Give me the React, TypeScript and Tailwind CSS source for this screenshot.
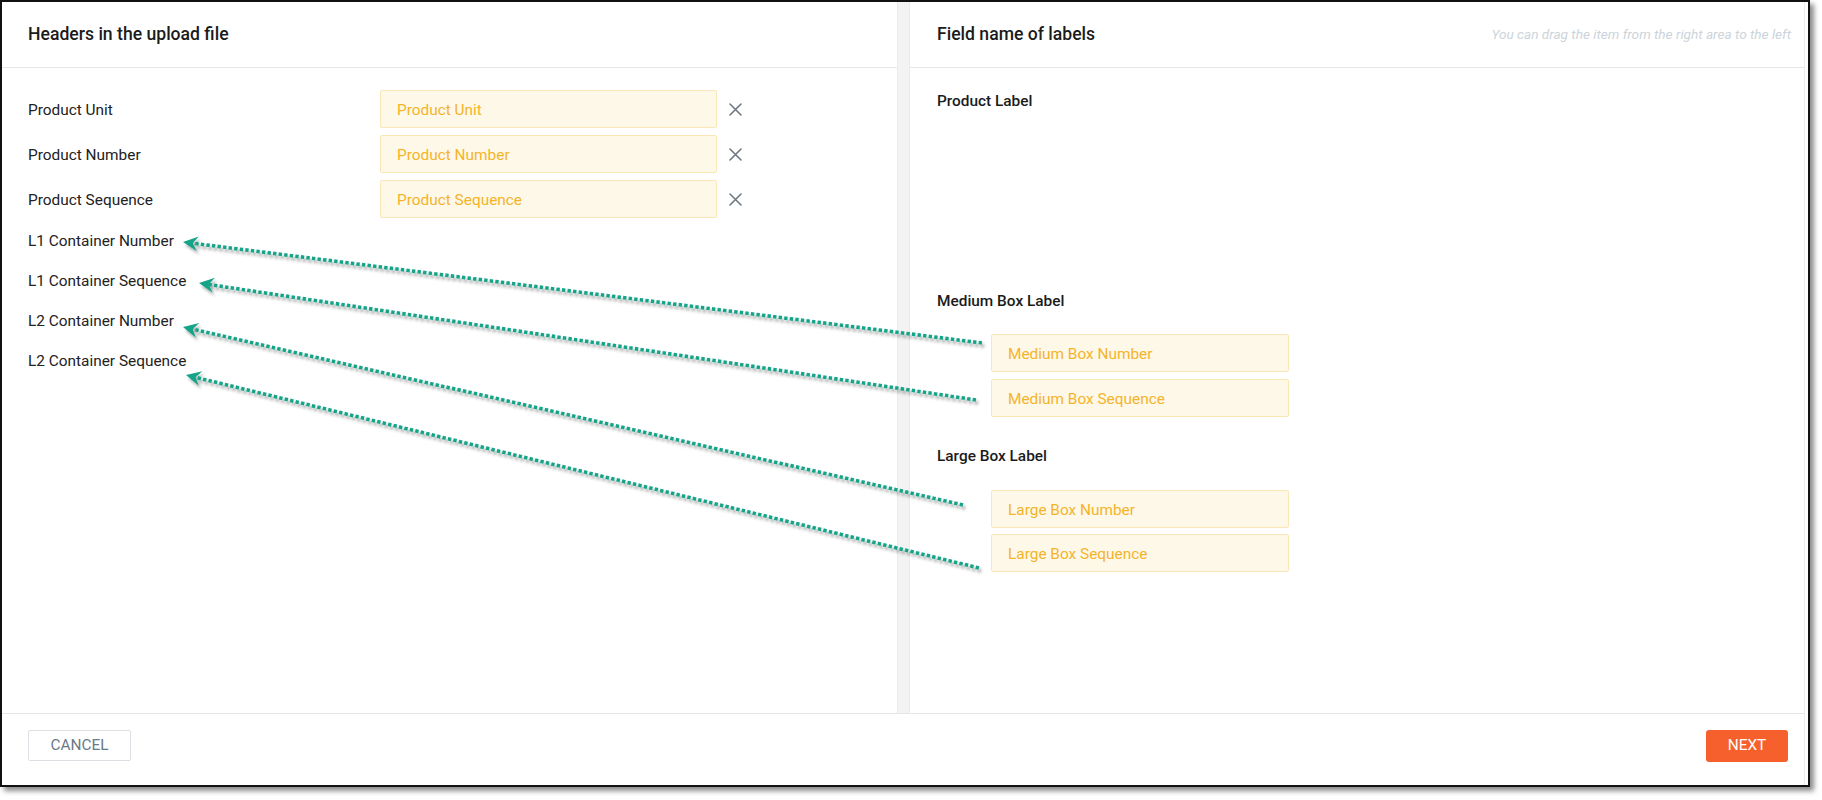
import React from "react";

const leftRows: { label: string; value?: string }[] = [
  { label: "Product Unit", value: "Product Unit" },
  { label: "Product Number", value: "Product Number" },
  { label: "Product Sequence", value: "Product Sequence" },
  { label: "L1 Container Number" },
  { label: "L1 Container Sequence" },
  { label: "L2 Container Number" },
  { label: "L2 Container Sequence" },
];

const arrows = [
  { x1: 982, y1: 343, x2: 183, y2: 242 },
  { x1: 976, y1: 400, x2: 199, y2: 283 },
  { x1: 963, y1: 505, x2: 183, y2: 327 },
  { x1: 979, y1: 568, x2: 186, y2: 375 },
];

function CloseIcon() {
  return (
    <svg width="13" height="13" viewBox="0 0 13 13" className="ml-[12px] shrink-0">
      <path d="M1 1 L12 12 M12 1 L1 12" stroke="#6f7782" strokeWidth="1.6" strokeLinecap="round" />
    </svg>
  );
}

function YellowBox({ text, width }: { text: string; width: string }) {
  return (
    <div
      className={`${width} h-[38px] shrink-0 flex items-center px-4 pt-[3px] bg-[#fef8e9] border border-[#fbe7b6] rounded-[2px] text-[15.4px] text-[#f4b42a]`}
    >
      {text}
    </div>
  );
}

function Arrow({ x1, y1, x2, y2 }: { x1: number; y1: number; x2: number; y2: number }) {
  const dx = x2 - x1;
  const dy = y2 - y1;
  const len = Math.sqrt(dx * dx + dy * dy);
  const ux = dx / len;
  const uy = dy / len;
  const L = 15;
  const W = 7.5;
  const bx = x2 - ux * L;
  const by = y2 - uy * L;
  const px = -uy;
  const py = ux;
  const nx = x2 - ux * L * 0.65;
  const ny = y2 - uy * L * 0.65;
  const pts = `${x2},${y2} ${bx + px * W},${by + py * W} ${nx},${ny} ${bx - px * W},${by - py * W}`;
  const ex = x2 - ux * L * 0.6;
  const ey = y2 - uy * L * 0.6;
  return (
    <g filter="url(#arrowShadow)">
      <line x1={x1} y1={y1} x2={ex} y2={ey} stroke="#17a488" strokeWidth="3.6" strokeDasharray="3.4 2.2" />
      <polygon points={pts} fill="#17a488" />
    </g>
  );
}

export default function App() {
  return (
    <div className="relative w-[1822px] h-[800px] bg-white font-['Roboto','Liberation_Sans',sans-serif]">
      <div className="w-[1810px] h-[787px] border-2 border-[#111] bg-white shadow-[4px_4px_5px_rgba(0,0,0,0.45)] flex">
        <div className="flex-1 mr-[3px] border-r border-[#ececec] flex flex-col min-w-0">
          <div className="flex flex-1 min-h-0">
            {/* Left panel */}
            <div className="w-[895px] shrink-0 flex flex-col">
              <div className="h-[66px] border-b border-[#e6e6e6] flex items-center pl-[26px] text-[17.6px] font-medium text-[#1b1b1b]">
                Headers in the upload file
              </div>
              <div className="pt-[22px] pl-[26px] flex flex-col gap-[7px]">
                {leftRows.map((r) => (
                  <div key={r.label} className={`flex items-center ${r.value ? "h-[38px]" : "h-[33px]"}`}>
                    <span className={`w-[352px] shrink-0 text-[15.4px] text-[#222] ${r.value ? "pt-[3px]" : ""}`}>
                      {r.label}
                    </span>
                    {r.value && (
                      <>
                        <YellowBox text={r.value} width="w-[337px]" />
                        <CloseIcon />
                      </>
                    )}
                  </div>
                ))}
              </div>
            </div>
            {/* Divider strip */}
            <div className="w-[13px] shrink-0 bg-[#f3f3f3] border-x border-[#ebebeb]" />
            {/* Right panel */}
            <div className="flex-1 flex flex-col min-w-0">
              <div className="h-[66px] border-b border-[#e6e6e6] flex items-center justify-between pl-[27px] pr-[13px]">
                <span className="text-[17.6px] font-medium text-[#1b1b1b]">Field name of labels</span>
                <span className="text-[13.6px] italic text-[#ccd4db]">
                  You can drag the item from the right area to the left
                </span>
              </div>
              <div className="pt-[23px] pl-[27px] flex flex-col">
                <div className="h-[200px]">
                  <div className="leading-[20px] text-[15.4px] font-medium text-[#1b1b1b]">Product Label</div>
                </div>
                <div className="h-[155px]">
                  <div className="leading-[20px] text-[15.4px] font-medium text-[#1b1b1b]">Medium Box Label</div>
                  <div className="mt-[23px] ml-[54px] flex flex-col gap-[7px]">
                    <YellowBox text="Medium Box Number" width="w-[298px]" />
                    <YellowBox text="Medium Box Sequence" width="w-[298px]" />
                  </div>
                </div>
                <div>
                  <div className="leading-[20px] text-[15.4px] font-medium text-[#1b1b1b]">Large Box Label</div>
                  <div className="mt-[24px] ml-[54px] flex flex-col gap-[6px]">
                    <YellowBox text="Large Box Number" width="w-[298px]" />
                    <YellowBox text="Large Box Sequence" width="w-[298px]" />
                  </div>
                </div>
              </div>
            </div>
          </div>
          {/* Footer */}
          <div className="h-[72px] shrink-0 border-t border-[#e6e6e6] flex items-start justify-between pt-[16px] pl-[26px] pr-[16px]">
            <button className="w-[103px] h-[31px] border border-[#dcdfe3] rounded-[2px] bg-white text-[15.4px] text-[#6b7a8a] flex items-center justify-center">
              CANCEL
            </button>
            <button className="w-[82px] h-[32px] rounded-[3px] bg-[#f5602d] text-[15.4px] text-white flex items-center justify-center">
              NEXT
            </button>
          </div>
        </div>
      </div>
      <svg className="absolute left-0 top-0 pointer-events-none" width="1822" height="800">
        <defs>
          <filter id="arrowShadow" x="-10%" y="-50%" width="120%" height="200%">
            <feDropShadow dx="2" dy="3" stdDeviation="1.6" floodColor="#000" floodOpacity="0.35" />
          </filter>
        </defs>
        {arrows.map((a, i) => (
          <Arrow key={i} {...a} />
        ))}
      </svg>
    </div>
  );
}
